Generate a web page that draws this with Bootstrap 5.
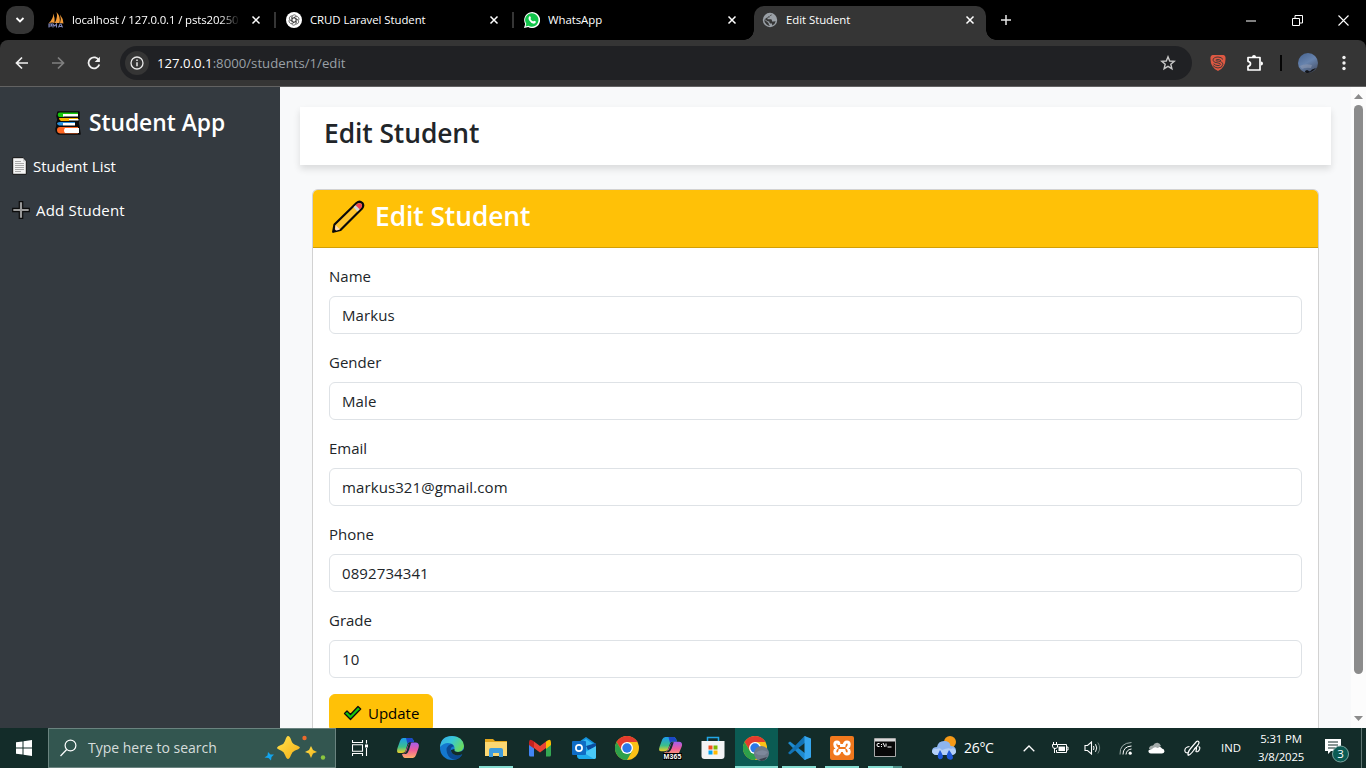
<!DOCTYPE html>
<html lang="en">
<head>
<meta charset="utf-8">
<title>Edit Student</title>
<link href="https://cdn.jsdelivr.net/npm/bootstrap@5.3.0/dist/css/bootstrap.min.css" rel="stylesheet">
<style>
  body { width:1366px; height:768px; overflow:hidden; font-family:"Open Sans","Noto Sans",sans-serif; font-size:15px; line-height:24px; color:#212529; background:#000; }
  svg { display:block; flex:none; }
  /* browser chrome */
  .tabstrip { height:40px; background:#000; color:#fff; font-size:11.4px; }
  .tab-search { width:28px; height:28px; margin:0 6px; border-radius:10px; background:#353535; }
  .btab { width:238px; height:40px; padding:0 0 0 8px; position:relative; }
  .btab .ttl { width:168px; margin-left:8px; overflow:hidden; white-space:nowrap; line-height:20px; letter-spacing:-.05px; }
  .btab .ttl.fade-end { letter-spacing:-.12px; -webkit-mask-image:linear-gradient(90deg,#000 148px,transparent 168px); mask-image:linear-gradient(90deg,#000 148px,transparent 168px); }
  .btab .x { margin-left:11px; }
  .btab .sep { width:2px; height:16px; margin-left:13px; background:#353535; }
  .btab.on { width:232px; height:34px; background:#353535; border-radius:10px 10px 0 0; align-self:flex-end; padding-bottom:6px; }
  .btab.on::before,.btab.on::after { content:""; position:absolute; bottom:0; width:10px; height:10px; }
  .btab.on::before { left:-10px; background:radial-gradient(circle at 0 0,transparent 9.5px,#353535 10px); }
  .btab.on::after { right:-10px; background:radial-gradient(circle at 100% 0,transparent 9.5px,#353535 10px); }
  .toolbar { height:47px; background:#353535; border-bottom:1px solid #626262; border-radius:8px 8px 0 0; }
  .omni { width:1072px; height:34px; border-radius:17px; background:#202124; color:#9aa0a6; font-size:13.2px; }
  .omni .info { width:24px; height:24px; border-radius:50%; background:#353535; }
  .omni b { font-weight:400; color:#fff; }
  /* page */
  .page { height:641px; background:#f8f9fa; overflow:hidden; }
  .side { width:280px; background:#343a40; color:#fff; padding-top:20px; }
  .side h4 { font-size:22.8px; line-height:28.8px; font-weight:600; margin:0 0 8px; padding-top:3px; height:29px; }
  .side a { color:#fff; height:44px; padding:0 12px; text-decoration:none; }
  .side a .wide { letter-spacing:.2px; }
  .content-area { width:1071px; padding:20px; }
  .page-title { height:58px; padding:9px 24px; box-shadow:0 4px 7px rgba(0,0,0,.12) !important; }
  h3.t { font-size:26.4px; line-height:35px; font-weight:600; margin:0; letter-spacing:-.08px; }
  .card.form-card { margin:24px 12px 0; border-color:rgba(0,0,0,.176); }
  .form-card .card-header { height:58px; padding:8px 16px; background:#ffc107; color:#fff; }
  .form-card .card-body { padding:16px; }
  .form-label { display:block; height:24px; margin-bottom:8px; }
  .form-control { height:38px; font-size:15px; line-height:24px; border-color:#dee2e6; letter-spacing:.1px; }
  .btn-warning { width:104px; height:38px; font-size:15px; padding:6px 12px 6px 13px; }
  .sbar { width:15px; background:#fcfcfc; }
  .sbar .thumb { width:9px; height:569px; border-radius:5px; background:#8b8b8b; }
  /* taskbar */
  .taskbar { height:40px; background:#132c29; color:#fff; }
  .tsearch { width:288px; height:40px; background:#335650; border:1px solid #6a837f; color:#d6dddc; font-size:14px; }
  .ti { width:44px; height:40px; position:relative; }
  .ti.n { width:43px; padding-right:1px; }
  .ti.run::after { content:""; position:absolute; bottom:0; left:5px; width:34px; height:2px; background:#85dcd0; }
  .ti.n.run::after { left:4px; }
  .ti.live { background:#0b5b53; }
  .ti.n.live::after { left:0; width:43px; }
  .ti.multi::after { background:linear-gradient(90deg,#85dcd0 25px,#4c8f87 25px); }
  .tray { font-size:11.4px; }
</style>
</head>
<body>

<div class="tabstrip d-flex align-items-center">
  <div class="tab-search d-flex align-items-center justify-content-center">
    <svg width="10" height="8" viewBox="0 0 10 8"><path d="M1.500 2 5 5.500 8.500 2" fill="none" stroke="#fff" stroke-width="1.800"/></svg>
  </div>
  <div class="btab d-flex align-items-center">
    <svg width="16" height="16" viewBox="0 0 16 16"><path d="M5 1.500Q6 6 .5 11.500Q4 10 6.500 11Q7 5 5 1.500M8.500 0Q13 5 11.500 11L6.800 11Q10 5 8.500 0M12 2.500Q15.500 7 15.500 11.500L12 11Q13.500 7 12 2.500" fill="#f29b38"/><path d="M1 15.500v-3.500h2.500v2H1M5 15.500v-3.500l1.700 2 1.800-2v3.500M10.500 15.500l1.500-3.500h1l1.500 3.500M11 14.500h3" fill="none" stroke="#8087bb" stroke-width="1.100"/></svg>
    <span class="ttl fade-end">localhost / 127.0.0.1 / psts20250</span>
    <svg class="x" width="10" height="10" viewBox="0 0 10 10"><path d="M1.500 1.500l7 7m0-7l-7 7" stroke="#fff" stroke-width="1.500"/></svg>
    <span class="sep"></span>
  </div>
  <div class="btab d-flex align-items-center">
    <svg width="16" height="16" viewBox="0 0 16 16"><circle cx="8" cy="8" r="8" fill="#fff"/><g fill="none" stroke="#333" stroke-width=".65"><path id="pt" d="M6 9.200V5.300Q6 2.800 8.300 2.800 10 2.800 10.500 4.200M6.100 6.700 9.700 4.600"/><use href="#pt" transform="rotate(60 8 8)"/><use href="#pt" transform="rotate(120 8 8)"/><use href="#pt" transform="rotate(180 8 8)"/><use href="#pt" transform="rotate(240 8 8)"/><use href="#pt" transform="rotate(300 8 8)"/></g></svg>
    <span class="ttl">CRUD Laravel Student</span>
    <svg class="x" width="10" height="10" viewBox="0 0 10 10"><path d="M1.500 1.500l7 7m0-7l-7 7" stroke="#fff" stroke-width="1.500"/></svg>
    <span class="sep"></span>
  </div>
  <div class="btab d-flex align-items-center">
    <svg width="16" height="16" viewBox="0 0 16 16"><path d="M0 16 1.200 12A8 8 0 1 1 4.200 15Z" fill="#fff"/><path d="M1.600 14.500 2.300 11.800A6.700 6.700 0 1 1 4.500 13.800Z" fill="#12c34a"/><path d="M5.300 4.200 6.200 4.200 7 6 6.400 7Q7.300 8.800 9.200 9.500L10 8.700 11.900 9.600Q12 11.600 9.900 11.700 7 11.500 4.900 8 3.900 5.600 5.300 4.200" fill="#fff"/></svg>
    <span class="ttl">WhatsApp</span>
    <svg class="x" width="10" height="10" viewBox="0 0 10 10"><path d="M1.500 1.500l7 7m0-7l-7 7" stroke="#fff" stroke-width="1.500"/></svg>
  </div>
  <div class="btab on d-flex align-items-center">
    <svg width="16" height="16" viewBox="0 0 16 16"><circle cx="8" cy="8" r="7.200" fill="#9aa0a6"/><path d="M9.600 2.200 9.200 3.800H7.500V5.500H5.500V7.300H9.200Q10.200 7.700 10 9.500H11.500L13.700 9.200Q13 12.500 10.200 13.500L10 11.500H8.200Q7.200 11 7.300 9.500L5.500 9.300 2.300 6.800Q1.900 10 4.300 12.300 6 13.900 8 13.900 6.500 12.500 6.500 11L2.300 7.500" fill="#353535"/></svg>
    <span class="ttl">Edit Student</span>
    <svg class="x" width="10" height="10" viewBox="0 0 10 10"><path d="M1.500 1.500l7 7m0-7l-7 7" stroke="#fff" stroke-width="1.500"/></svg>
  </div>
  <svg style="margin-left:15px" width="10" height="10" viewBox="0 0 10 10"><path d="M5 0v10M0 5h10" stroke="#e6e6e6" stroke-width="1.500"/></svg>
  <div class="d-flex align-items-center ms-auto" style="padding-right:17px;gap:35.5px">
    <svg width="10" height="11" viewBox="0 0 10 11"><path d="M0 6h10" stroke="#fff"/></svg>
    <svg width="11" height="11" viewBox="0 0 11 11"><path d="M.5 3.500h7v7h-7zM3 3V.500h7.500V8H8" fill="none" stroke="#fff"/></svg>
    <svg width="11" height="11" viewBox="0 0 11 11"><path d="M.5.5l10 10m0-10l-10 10" stroke="#fff" stroke-width="1.100"/></svg>
  </div>
</div>

<div class="toolbar d-flex align-items-center">
  <svg style="margin-left:15px" width="14" height="14" viewBox="0 0 14 14"><path d="M13 7H2M7 1.500 1.500 7 7 12.500" fill="none" stroke="#f1f1f1" stroke-width="1.700"/></svg>
  <svg style="margin-left:22px" width="14" height="14" viewBox="0 0 14 14"><path d="M1 7h11M7 1.500 12.500 7 7 12.500" fill="none" stroke="#808080" stroke-width="1.700"/></svg>
  <svg style="margin-left:22px;margin-right:19px" width="14" height="14" viewBox="0 0 14 14"><path d="M12 4.500A5.500 5.500 0 1 0 12.300 8.500" fill="none" stroke="#f1f1f1" stroke-width="1.800"/><path d="M12.900.8V6H7.700z" fill="#f1f1f1"/></svg>
  <div class="omni d-flex align-items-center">
    <div class="info d-flex align-items-center justify-content-center" style="margin-left:5px;margin-right:8px">
      <svg width="14" height="14" viewBox="0 0 14 14"><circle cx="7" cy="7" r="6" fill="none" stroke="#e8e8e8" stroke-width="1.300"/><path d="M7 6.300v4M7 3.600v1.500" stroke="#e8e8e8" stroke-width="1.500"/></svg>
    </div>
    <span class="url"><b>127.0.0.1</b>:8000/students/1/edit</span>
    <svg class="ms-auto" style="margin-right:16px" width="16" height="16" viewBox="0 0 16 16"><path d="M8 1.800 9.700 6 14.200 6.300 10.800 9.200 11.900 13.700 8 11.300 4.100 13.700 5.200 9.200 1.800 6.300 6.300 6Z" fill="none" stroke="#c7c7c7" stroke-width="1.400"/></svg>
  </div>
  <svg style="margin-left:18px" width="16" height="16" viewBox="0 0 16 16"><path d="M2.500 0h11Q16 .5 15.500 4.500 15.500 12.500 8 16 .5 12.500.5 4.500 0 .5 2.500 0" fill="#de5842"/><path d="M13 4.500Q11.500 2 8 2 3 2.200 3 5.200 3.200 7.600 8 8 10.500 8.300 10.500 9.300 10 10.600 8 10.600 5.500 10.500 3.500 8.800M11 5.800Q9.800 4.500 8 4.500 5.800 4.700 5.800 5.300 6 6 8.500 6.200 12.800 6.500 12.800 9.500 12.300 13 8 13 5 12.800 2.800 10.500" fill="none" stroke="#353535" stroke-width=".9"/></svg>
  <svg style="margin-left:20px" width="18" height="18" viewBox="0 0 18 18"><path d="M2 3.500h12V16H2V12.300Q4.500 11.800 4.500 9.800 4.500 7.800 2 7.300Z" fill="none" stroke="#fff" stroke-width="1.700" stroke-linejoin="round"/><path d="M6 3a2 2 0 0 1 4 0zM15 7.500a2 2 0 0 1 0 4z" fill="#fff"/></svg>
  <span style="width:2px;height:16px;background:#050505;margin-left:16px"></span>
  <svg style="margin-left:16px" width="20" height="20" viewBox="0 0 20 20"><defs><linearGradient id="av" x1="0" y1="0" x2=".6" y2="1"><stop offset="0" stop-color="#45628f"/><stop offset=".55" stop-color="#6783ad"/><stop offset="1" stop-color="#4d5a74"/></linearGradient></defs><circle cx="10" cy="10" r="10" fill="url(#av)"/><path d="M2 13Q7 10 14 12L13 15Q8 14 4 16" fill="#8c98b0" opacity=".6"/><path d="M7 18 9 17 12 18.500 14 16.500 18 15Q15 19 10 20 7 20 7 18" fill="#121419"/></svg>
  <svg style="margin-left:24px" width="4" height="16" viewBox="0 0 4 16"><g fill="#f1f1f1"><circle cx="2" cy="2.500" r="1.700"/><circle cx="2" cy="8" r="1.700"/><circle cx="2" cy="13.500" r="1.700"/></g></svg>
</div>

<div class="page d-flex">
  <nav class="side flex-shrink-0">
    <h4 class="d-flex justify-content-center align-items-center">
      <svg style="margin-right:8px" width="26" height="24" viewBox="0 0 26 24"><path d="M3 1H24V7L23 12 24 16 25 23H4Q1 22 1 18L2 15Q1 12 3 9L2 5Z" fill="#0b0b0b" stroke="#0b0b0b" stroke-width="1.500" stroke-linejoin="round"/><path d="M3 5Q2 1.500 5 1.500H23V3H9V6H4z" fill="#16c60c"/><path d="M8 3H23V5.500H8z" fill="#fff"/><path d="M4 7H23V8H14V10H6Q4 9 4 7" fill="#f7b500"/><path d="M14 8H23.500V9.500H14z" fill="#fff"/><path d="M2 13Q2 11 5 11H20V12H8V14.500H4z" fill="#2a8fd8"/><path d="M8 12H20V14.500H8z" fill="#fff"/><path d="M2 19Q2 16 5 16H23V22.500H5Q2 22 2 19" fill="#ff6723"/><path d="M10 17H24V22H10Q8 19.500 10 17" fill="#fff"/></svg>
      <span>Student App</span>
    </h4>
    <a href="#" class="d-flex align-items-center"><svg style="margin-right:6px" width="15" height="18" viewBox="0 0 15 18"><path d="M.7.7H11L14.300 4V17.300H.7z" fill="#f4f4f4" stroke="#111"/><path d="M3 4.500h6M3 6.500h9M3 8.500h9M3 10.500h9M3 12.500h9M3 14.500h6" stroke="#aaa"/><path d="M11 1v3.500h3" fill="#ccc"/></svg><span>Student List</span></a>
    <a href="#" class="d-flex align-items-center"><svg style="margin-right:6px" width="18" height="18" viewBox="0 0 18 18"><path d="M7.300.7h3.400v6.600h6.600v3.400h-6.600v6.600H7.300v-6.600H.7V7.300h6.600z" fill="#9a9a9a" stroke="#0c0c0c" stroke-width="1.200"/></svg><span class="wide">Add Student</span></a>
  </nav>
  <main class="content-area">
    <div class="page-title bg-white shadow-sm"><h3 class="t">Edit Student</h3></div>
    <div class="card form-card">
      <div class="card-header">
        <h3 class="t d-flex align-items-center"><svg style="margin:2px 10px 0 2px" width="34" height="34" viewBox="0 0 34 34"><path d="M2.200 31.800 3.500 24.500 25.500 3Q28.500.5 31.300 3 33.300 5.500 31 8.500L9.500 30Z" fill="#ffc52b" stroke="#0a0a0a" stroke-width="2.200" stroke-linejoin="round"/><path d="M4.500 25 9 29.500 4 31z" fill="#ffddb5"/><path d="M22.500 7.300 26.500 11.500 28.700 9.300 24.500 5.300z" fill="#d5d8dc"/><path d="M24.700 5.200 28.800 9.300Q32 6.500 30.500 4 28 1.800 24.700 5.200" fill="#ee4058"/><path d="M2 32 3 28.500 5.500 31z" fill="#0a0a0a"/></svg><span>Edit Student</span></h3>
      </div>
      <form class="card-body">
        <div class="mb-3"><label class="form-label">Name</label><input class="form-control" value="Markus"></div>
        <div class="mb-3"><label class="form-label">Gender</label><input class="form-control" value="Male"></div>
        <div class="mb-3"><label class="form-label">Email</label><input class="form-control" value="markus321@gmail.com"></div>
        <div class="mb-3"><label class="form-label">Phone</label><input class="form-control" value="0892734341"></div>
        <div class="mb-3"><label class="form-label">Grade</label><input class="form-control" value="10"></div>
        <button type="button" class="btn btn-warning d-flex align-items-center"><svg style="margin-right:6px" width="19" height="16" viewBox="0 0 19 16"><path d="M1.500 8.500 4 6 7.500 9.500 15 1.500 17.700 4 7.500 14.500Z" fill="#16c60c" stroke="#0c0c0c" stroke-width="1.300" stroke-linejoin="round"/></svg>Update</button>
      </form>
    </div>
  </main>
  <div class="sbar d-flex flex-column align-items-center">
    <svg style="margin:6px 0 5px" width="9" height="7" viewBox="0 0 9 7"><path d="M0 6 4.500 1 9 6z" fill="#8b8b8b"/></svg>
    <div class="thumb"></div>
    <svg class="mt-auto" style="margin-bottom:6px" width="9" height="6" viewBox="0 0 9 6"><path d="M0 0 4.500 5 9 0z" fill="#8b8b8b"/></svg>
  </div>
</div>

<div class="taskbar d-flex align-items-center">
  <div class="d-flex justify-content-center" style="width:48px"><svg width="16" height="16" viewBox="0 0 16 16"><path d="M0 2.300 6.500 1.400V7.500H0zM7.500 1.200 16 0V7.500H7.500zM0 8.500H6.500V14.600L0 13.700zM7.500 8.500H16V16L7.500 14.800z" fill="#fff"/></svg></div>
  <div class="tsearch d-flex align-items-center">
    <svg style="margin-left:11px;margin-right:11px" width="17" height="18" viewBox="0 0 17 18"><circle cx="10.500" cy="6.500" r="5.400" fill="none" stroke="#fff" stroke-width="1.200"/><path d="M6.700 10.500.5 17" stroke="#fff" stroke-width="1.200"/></svg>
    <span>Type here to search</span>
    <svg class="ms-auto" style="margin-right:9px" width="62" height="26" viewBox="0 0 62 26"><defs><linearGradient id="st" x1="0" y1="0" x2="1" y2="1"><stop offset="0" stop-color="#ffe34d"/><stop offset="1" stop-color="#f5ae16"/></linearGradient></defs><path d="M24 1Q26 1 27.500 6 28.500 9 33 10.500 36 12 36 12.800 35 14.500 31 15.500 28 16.500 27 20 25.500 24 24 24 22.500 24 21 20 20 16.500 17 15.500 13 14 13 12.700 13.500 11 17 10 20 9 21 6 22.500 1 24 1" fill="url(#st)"/><path d="M47 11 49 15 53 17 49 18.500 47 23 45 18.500 41 17 45 15z" fill="url(#st)"/><path d="M4 17 6.500 19.500 10 19.500 7.500 22 7 25.500 4.500 23 .5 22.500 3.500 20.500z" fill="#12a5ee"/><circle cx="40.500" cy="3" r="2.200" fill="#ec6a2c"/><circle cx="59" cy="22.500" r="2.200" fill="#8cc63f"/></svg>
  </div>
  <div class="d-flex justify-content-center" style="width:48px;margin-right:2px"><svg width="16" height="16" viewBox="0 0 16 16"><path d="M.5 0v2.500h10V0M.5 16v-2.500h10V16M.5 4.700h10v6.600H.500zM14.500 0v3.500M14.500 8v8" fill="none" stroke="#fff" stroke-width="1.100"/><path d="M13 4.500h3v3h-3z" fill="#fff"/></svg></div>

  <div class="ti d-flex align-items-center justify-content-center"><svg width="24" height="24" viewBox="0 0 24 24"><defs><linearGradient id="c1" x1="0" y1="0" x2="0" y2="1"><stop offset="0" stop-color="#1a9bf0"/><stop offset=".6" stop-color="#3cbf8a"/><stop offset="1" stop-color="#f2d024"/></linearGradient><linearGradient id="c2" x1="0" y1="0" x2="0" y2="1"><stop offset="0" stop-color="#a45df0"/><stop offset=".5" stop-color="#ef5d98"/><stop offset="1" stop-color="#ffb06a"/></linearGradient></defs><path d="M7 2H15Q17 2 18 6H14Q12 6 11.500 8L9.500 15Q8.500 17 6 17H3Q0 17 1.500 12L4 5Q5 2 7 2" fill="url(#c1)"/><path d="M10 2H15Q17 2 18 6H14Q12 6 11.500 8Z" fill="#1c47c6"/><path d="M17 22H9Q7 22 6 18 9 18 10 14L12.500 8Q13.500 6.500 16 6.500H20Q24 7 22.500 12L20 19Q19 22 17 22" fill="url(#c2)"/><path d="M13 7 10.500 15Q9 18 6 18H10Q12 17 13 14L15 7z" fill="#132c29"/></svg></div>
  <div class="ti d-flex align-items-center justify-content-center"><svg width="24" height="24" viewBox="0 0 24 24"><defs><linearGradient id="e1" x1="0" y1="0" x2="1" y2=".5"><stop offset="0" stop-color="#35a9ea"/><stop offset=".5" stop-color="#38c8d8"/><stop offset="1" stop-color="#68da62"/></linearGradient></defs><circle cx="12" cy="12" r="12" fill="#1478cf"/><path d="M0 11Q1 0 12 0 23 .5 24 10 23.500 15.500 18 16 13.500 16 14.500 13 15 9 11 7.500 5 5.500 0 11" fill="url(#e1)"/><path d="M11 8Q5 10.500 7 17 9 23 15 23.600 20 23 22.500 18 18 20.500 14 18.500 9.500 16 11 12 12 10 14 10.500 13 8 11 8" fill="#0b4a91"/><path d="M22.700 18Q18 20.500 14 18.500 11 17 11 14L14.500 13Q13.500 16 18 16 22 16 24 13L24 24H20Z" fill="#132c29"/></svg></div>
  <div class="ti run d-flex align-items-center justify-content-center"><svg width="22" height="20" viewBox="0 0 22 20"><path d="M0 1H8L10 3H22V18H0z" fill="#e3a61c"/><path d="M0 4H22V18H0z" fill="#fcd872"/><path d="M4 19V12Q4 10 6 10H16Q18 10 18 12V19H14V15H8V19z" fill="#3f9ddc"/></svg></div>
  <div class="ti d-flex align-items-center justify-content-center"><svg width="22" height="18" viewBox="0 0 22 18"><path d="M0 3.500 5 6V17.500H1.500Q0 17.500 0 16z" fill="#4285f4"/><path d="M22 3.500 17 6V17.500H20.500Q22 17.500 22 16z" fill="#34a853"/><path d="M17 2.500Q22-1.500 22 3.500V6L17 10z" fill="#fbbc04"/><path d="M5 2.500 11 7 17 2.500V9L11 13.500 5 9z" fill="#ea4335"/><path d="M0 3.500Q0-1.500 5 2.500V9.500L0 6z" fill="#c5221f"/></svg></div>
  <div class="ti d-flex align-items-center justify-content-center"><svg width="24" height="24" viewBox="0 0 24 24"><path d="M4 8 14 1 24 8V22H6z" fill="#1391dc"/><path d="M7 8 14 3 21 8 14 13z" fill="#36b8f2"/><path d="M5 14 15 13 24 8V21Q24 23 22 23H7Q5 22 5 20z" fill="#1dabec"/><path d="M14 10 24 7V11L16 14z" fill="#0b4c9d"/><path d="M12 17 24 10V21Q24 23 22 23z" fill="#49c9f7"/><rect y="5" width="14" height="14" rx="1" fill="#0f6cc4"/><circle cx="7" cy="12" r="3.100" fill="none" stroke="#fff" stroke-width="1.700"/></svg></div>
  <div class="ti n d-flex align-items-center justify-content-center"><svg width="24" height="24" viewBox="0 0 24 24"><g id="chr"><circle cx="12" cy="12" r="12" fill="#fbc116"/><path d="M1.600 6A12 12 0 0 1 22.400 6H12L7 15z" fill="#e33b2e"/><path d="M1.600 6A12 12 0 0 0 12 24L17.200 15 12 17 7 15z" fill="#2da04b"/><circle cx="12" cy="12" r="6" fill="#fff"/><circle cx="12" cy="12" r="4.700" fill="#2b78e8"/></g></svg></div>
  <div class="ti n d-flex align-items-center justify-content-center"><svg width="26" height="26" viewBox="0 0 26 26"><g transform="translate(1 1) scale(1.050 .9)"><path d="M7 1H15Q17 1 18 6H14Q12 6 11.500 8L9.500 15Q8.500 17 6 17H3Q0 17 1.500 12L4 4Q5 1 7 1" fill="url(#c1)"/><path d="M10 1H15Q17 1 18 6H14Q12 6 11.500 8Z" fill="#1c47c6"/><path d="M17 22H9Q7 22 6 18 9 18 10 14L12.500 8Q13.500 6.500 16 6.500H20Q24 7 22.500 12L20 19Q19 22 17 22" fill="url(#c2)"/><path d="M13 7 10.500 15Q9 18 6 18H10Q12 17 13 14L15 7z" fill="#132c29"/></g><path d="M6 18H25V25H6z" fill="#000"/><text x="6.500" y="24.200" font-family="Liberation Sans" font-weight="700" font-size="7" textLength="18" fill="#fff">M365</text></svg></div>
  <div class="ti n d-flex align-items-center justify-content-center"><svg width="24" height="24" viewBox="0 0 24 24"><path d="M6.500 6V1.500H17.500V6" fill="none" stroke="#22a7e6" stroke-width="1.500"/><path d="M.5 5H23.500V20Q23.500 23 20.500 23H3.500Q.5 23 .5 20z" fill="#f2f4f5"/><path d="M7.500 9.500h4v4h-4z" fill="#f25022"/><path d="M12.500 9.500h4v4h-4z" fill="#7fba00"/><path d="M7.500 14.500h4v4h-4z" fill="#00a4ef"/><path d="M12.500 14.500h4v4h-4z" fill="#ffb900"/></svg></div>
  <div class="ti n run live d-flex align-items-center justify-content-center"><svg width="26" height="26" viewBox="0 0 26 26"><use href="#chr" y="1"/><circle cx="18.500" cy="18.500" r="7.500" fill="#6f7a8a"/><path d="M12 18Q18 13 25 17L22 20Q15 21 12 18" fill="#7d889b"/><path d="M16 24.500 19 23.500 24 22Q22 26 18 26z" fill="#39404c"/></svg></div>
  <div class="ti n run d-flex align-items-center justify-content-center"><svg width="24" height="24" viewBox="0 0 24 24"><path d="M1 7 3 5.500 19 18V23.500L17.500 24z" fill="#1e8bd0"/><path d="M1 17 3 18.500 19 6V.5L17.500 0z" fill="#1273b5"/><path d="M17.500 0 24 2.500V21.500L17.500 24z" fill="#35a6ee"/></svg></div>
  <div class="ti n run d-flex align-items-center justify-content-center"><svg width="24" height="24" viewBox="0 0 24 24"><rect width="24" height="24" rx="2" fill="#f0781d"/><path d="M9 9V8.500Q9 6 7 6 4.800 6 4.800 8.500 4.800 10.500 6.500 12 4.800 13.500 4.800 15.500 4.800 18 7 18 9.500 18 10 14.500H14Q14.500 18 17 18 19.200 18 19.200 15.500 19.200 13.500 17.500 12 19.200 10.500 19.200 8.500 19.200 6 17 6 14.500 6 14 9.500H10" fill="none" stroke="#fff" stroke-width="3"/></svg></div>
  <div class="ti n run multi d-flex align-items-center justify-content-center"><svg width="22" height="20" viewBox="0 0 22 20"><path d="M.5.5h21v18H.500z" fill="#080808" stroke="#a9a9a9"/><path d="M1 1h20v2.500H1z" fill="#d9d9d9"/><path d="M5.500 5.500H4Q3 5.500 3 7 3 8.500 4 8.500H5.500M7.500 6v1M7.500 8v1M9 5l2 4M12 5.500v3M13.500 9h4" fill="none" stroke="#fff"/></svg></div>

  <div class="tray d-flex align-items-center ms-auto" style="width:435px;height:40px">
    <svg style="margin-left:1px" width="24" height="24" viewBox="0 0 24 24"><circle cx="18" cy="6" r="6" fill="#f59a17"/><path d="M4 19Q0 18 0 15 0 11 5 11 6 5 12 5 18 5 18.500 10 24 10 24 15 24 19 19 19z" fill="#8db5ef"/><path d="M4 19Q0 18 0 15 2 12 5 13 8 11 10 14 17 11 19 13 22 11 24 15 24 19 19 19z" fill="#b3cff8"/><path d="M8 14Q11 19 11 21 10 24 7 23 4 21 8 14M17 14Q21 19 21 22 20 25 16 23 13 21 17 14" fill="#1d57d8"/></svg>
    <span style="margin-left:8px;width:60px;font-size:14px;letter-spacing:-.3px">26°C</span>
    <svg style="margin-left:-1px" width="12" height="7" viewBox="0 0 12 7"><path d="M.7 6.300 6 1 11.300 6.300" fill="none" stroke="#fff" stroke-width="1.300"/></svg>
    <svg style="margin-left:17px" width="17" height="12" viewBox="0 0 17 12"><path d="M6 2.500H14.500V10.500H4.500V8M14.500 5H16V8H14.500M2.500 6v5M1.500 0v2.500M4.500 0v2.500" fill="none" stroke="#fff"/><path d="M.5 2.500h5V5Q5 6.500 3 6.500 .5 6.500.5 4z" fill="none" stroke="#fff"/><path d="M6.500 4.500h6.500v4.500H6.500z" fill="#fff"/></svg>
    <svg style="margin-left:15px" width="18" height="14" viewBox="0 0 18 14"><path d="M1 4.500H3.500L7.500 1V13L3.500 9.500H1z" fill="none" stroke="#fff" stroke-width="1.100"/><path d="M9.500 5Q10.500 7 9.500 9M11.500 3.200Q14 7 11.500 10.800" fill="none" stroke="#fff"/><path d="M13.800 1.500Q17.500 7 13.800 12.500" fill="none" stroke="#6f827f"/></svg>
    <svg style="margin-left:17px" width="13" height="14" viewBox="0 0 13 14"><g fill="none" stroke="#fff"><path d="M1 13.500Q.5 2 12.500 1.500" stroke="#9eacaa"/><path d="M4 13.500Q4 5.500 12.500 5M7 13.500Q7.500 8.500 12.500 8"/></g><circle cx="11.200" cy="12.200" r="1.600" fill="#fff"/></svg>
    <svg style="margin-left:16px" width="17" height="12" viewBox="0 0 17 12"><path d="M1 7Q1 3.500 5 3.500 6.500.5 9.500.8 12 1.200 13 4L8 7z" fill="#a4acab"/><path d="M3 11.500Q0 11 .5 8.500 1.500 7 4 7 6.500 4 9.500 6 12 4 14 6.500 16.500 7 16.500 9.500 16 11.500 14 11.500z" fill="#fff"/></svg>
    <svg style="margin-left:19px" width="17" height="17" viewBox="0 0 17 17"><path d="M5.500 6.500Q1 7 .8 10.500 1 13.500 4.500 12.500M4 15.500Q3.500 12 7 8L12.500 1.500Q14.500.5 15 2.500 15 4 12 7.500L8 12.500Q6 15 4 15.500M9.500 10.500Q12.500 5.500 12.500 8.500L12 11.500Q14 12.500 15.500 9.500 16.500 6.500 14.500 7" fill="none" stroke="#fff" stroke-width="1.200"/></svg>
    <span style="margin-left:20px;width:34px">IND</span>
    <div class="text-center" style="width:52px;line-height:18px;white-space:nowrap;letter-spacing:-.15px">5:31 PM<br>3/8/2025</div>
    <svg style="margin-left:18px;margin-top:4px" width="26" height="26" viewBox="0 0 26 26"><path d="M0 2H16V14H6L3 17V14H0z" fill="#fff"/><path d="M3 5h10M3 8h10M3 11h7" stroke="#132c29"/><circle cx="15.500" cy="17" r="8" fill="#0b5b53" stroke="#7ba39e"/><text x="15.500" y="21" text-anchor="middle" font-size="11.500" fill="#fff">3</text></svg>
    <span style="width:1px;height:40px;background:#5f7572;margin-left:auto;margin-right:4px"></span>
  </div>
</div>
<script src="https://cdn.jsdelivr.net/npm/bootstrap@5.3.0/dist/js/bootstrap.bundle.min.js"></script>
</body>
</html>
